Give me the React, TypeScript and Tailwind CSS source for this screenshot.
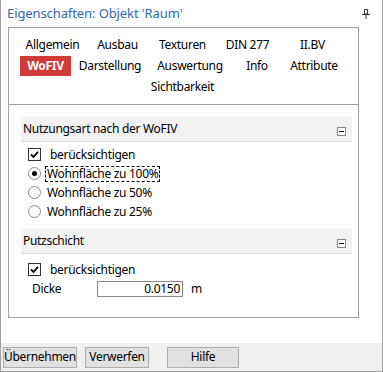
import React from "react";

const row1 = ["Allgemein", "Ausbau", "Texturen", "DIN 277", "II.BV"];
const row2: [string, number][] = [
  ["WoFIV", 51],
  ["Darstellung", 78],
  ["Auswertung", 82],
  ["Info", 52],
  ["Attribute", 62],
];

function Check() {
  return (
    <span className="flex h-[13px] w-[13px] shrink-0 items-center justify-center border border-[#333333] bg-white">
      <svg width="9" height="9" viewBox="0 0 9 9">
        <path d="M1 4.5 L3.5 7 L8 1.8" fill="none" stroke="#000" strokeWidth="1.8" />
      </svg>
    </span>
  );
}

function Radio({ on }: { on?: boolean }) {
  return (
    <span className="flex h-[13px] w-[13px] shrink-0 items-center justify-center rounded-full border border-[#8a8a8a] bg-white">
      {on && <span className="h-[5px] w-[5px] rounded-full bg-black" />}
    </span>
  );
}

function GroupHeader({ title }: { title: string }) {
  return (
    <div className="flex h-[25px] items-start justify-between border-b border-[#d5d5d5] bg-[#f2f2f2] pl-[2px] pr-[6px]">
      <span className="mt-[4px] leading-[15px]">{title}</span>
      <span className="mt-[10px] flex h-[9px] w-[9px] items-center justify-center border border-[#8a8a8a] bg-white">
        <span className="h-[1px] w-[5px] bg-black" />
      </span>
    </div>
  );
}

export default function App() {
  return (
    <div
      className="flex h-[372px] w-[383px] flex-col border-x border-b border-[#a0a0a0] bg-white text-[12px] tracking-[-0.3px] text-black"
      style={{ fontFamily: '"Noto Sans", "Open Sans", sans-serif' }}
    >
      <div className="flex h-[27px] items-center justify-between pl-[6px] pr-[12px]">
        <span className="text-[13px] tracking-[-0.1px] text-[#3468b0]">Eigenschaften: Objekt 'Raum'</span>
        <svg width="8" height="10" viewBox="0 0 8 10" className="mt-[1px]">
          <path d="M2.5 0.5 H5.5 V5 H2.5 Z" fill="none" stroke="#333" />
          <path d="M0 5.5 H8 M4 5.5 V10" stroke="#333" />
        </svg>
      </div>

      <div className="ml-[7px] flex h-[291px] w-[351px] flex-col border border-[#a0a0a0]">
        <div className="border-b border-[#a0a0a0] pb-[7px] pl-[11px] pt-[6px]">
          <div className="flex h-[21px] w-[325px] items-center">
            {row1.map((t) => (
              <div key={t} className="flex-1 text-center">
                {t}
              </div>
            ))}
          </div>
          <div className="flex h-[21px] w-[325px] items-center">
            {row2.map(([t, w]) =>
              t === "WoFIV" ? (
                <div
                  key={t}
                  style={{ width: w }}
                  className="flex h-[20px] items-center justify-center bg-[#d13a3a] font-bold text-white"
                >
                  {t}
                </div>
              ) : (
                <div key={t} style={{ width: w }} className="text-center">
                  {t}
                </div>
              )
            )}
          </div>
          <div className="flex h-[21px] w-[325px] items-center justify-center">Sichtbarkeit</div>
        </div>

        <div className="ml-[12px] mr-[6px] mt-[12px]">
          <GroupHeader title="Nutzungsart nach der WoFIV" />
          <div className="mt-[3px] flex h-[19px] items-center pl-[7px]">
            <Check />
            <span className="ml-[9px]">berücksichtigen</span>
          </div>
          <div className="flex h-[19px] items-center pl-[7px]">
            <Radio on />
            <span className="ml-[4px] border border-dashed border-black px-[1px] leading-[14px]">
              Wohnfläche zu 100%
            </span>
          </div>
          <div className="flex h-[19px] items-center pl-[7px]">
            <Radio />
            <span className="ml-[6px]">Wohnfläche zu 50%</span>
          </div>
          <div className="flex h-[19px] items-center pl-[7px]">
            <Radio />
            <span className="ml-[6px]">Wohnfläche zu 25%</span>
          </div>

          <div className="mt-[8px]">
            <GroupHeader title="Putzschicht" />
          </div>
          <div className="mt-[6px] flex h-[19px] items-center pl-[7px]">
            <Check />
            <span className="ml-[9px]">berücksichtigen</span>
          </div>
          <div className="flex h-[19px] items-center pl-[11px]">
            <span className="w-[65px]">Dicke</span>
            <span className="flex h-[16px] w-[86px] items-center justify-end border border-[#8a8a8a] pr-[2px]">
              0.0150
            </span>
            <span className="ml-[8px]">m</span>
          </div>
        </div>
      </div>

      <div className="mt-[25px] flex h-[28px] items-center bg-[#f0f0f0] pl-[2px]">
        <button className="flex h-[21px] w-[74px] items-center justify-center border border-[#adadad] bg-[#e1e1e1]">
          Übernehmen
        </button>
        <button className="ml-[8px] flex h-[21px] w-[64px] items-center justify-center border border-[#adadad] bg-[#e1e1e1]">
          Verwerfen
        </button>
        <button className="ml-[18px] flex h-[21px] w-[72px] items-center justify-center border border-[#adadad] bg-[#e1e1e1]">
          Hilfe
        </button>
      </div>
    </div>
  );
}
